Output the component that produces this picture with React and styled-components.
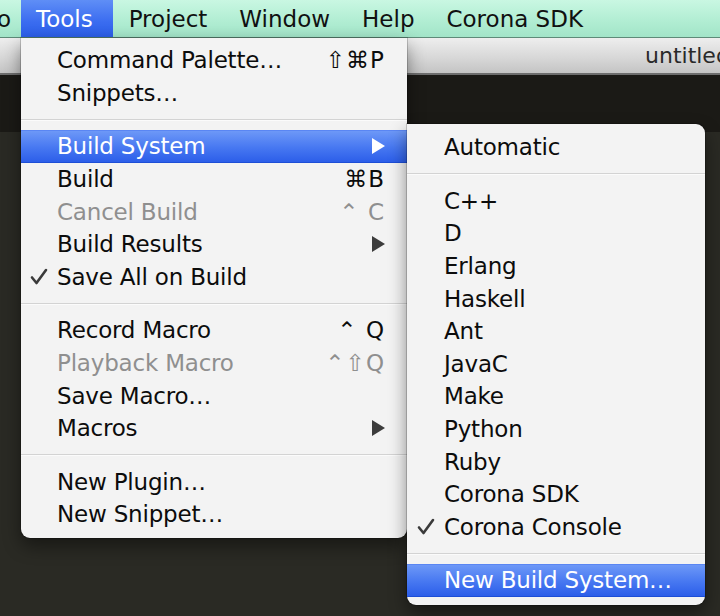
import React from 'react'
import styled, { createGlobalStyle, css } from 'styled-components'

const GlobalStyle = createGlobalStyle`
  html, body {
    margin: 0;
    padding: 0;
    background: #272822;
    overflow: hidden;
  }
  body {
    font-family: 'DejaVu Sans', 'Liberation Sans', sans-serif;
  }
`

const selected = css`
  color: #fff;
  background: linear-gradient(#6d98f7, #4677f1 55%, #2c5ee9);
  border-top: 1px solid #5a86f3;
  border-bottom: 1px solid #1d4ed6;
`

const Page = styled.div`
  position: relative;
  width: 720px;
  height: 616px;
  display: flex;
  flex-direction: column;
  background: #272822;
  overflow: hidden;
`

const MenuBar = styled.div`
  height: 37px;
  flex: none;
  display: flex;
  align-items: stretch;
  margin-left: -60px;
  background: linear-gradient(#c9f7e2, #b0edd2 60%, #a2e4c8);
  border-bottom: 1px solid #5e8a78;
`

const MenuTitle = styled.div`
  display: flex;
  align-items: center;
  padding: 0 16px;
  font-size: 23px;
  color: #111;
  white-space: nowrap;

  &:first-child {
    padding-right: 10px;
  }

  ${(p) =>
    p.$active &&
    css`
      padding: 0 20px 0 15px;
      color: #fff;
      background: linear-gradient(#5f8ef6, #3a6cf0 60%, #2b5ee8);
    `}
`

const TitleBar = styled.div`
  height: 35px;
  flex: none;
  display: flex;
  align-items: center;
  padding-left: 645px;
  background: linear-gradient(#eeeeee, #d6d6d6 60%, #c4c4c4);
  border-bottom: 2px solid #6d6d6d;
  font-size: 22px;
  color: #2a2a2a;
  white-space: nowrap;
`

const TabStrip = styled.div`
  height: 57px;
  flex: none;
  background: #1b1a16;
`

const Editor = styled.div`
  flex: 1;
  background: #2a2a24;
`

const Dropdown = styled.div`
  position: absolute;
  top: ${(p) => p.$top}px;
  left: ${(p) => p.$left}px;
  width: ${(p) => p.$width}px;
  display: flex;
  flex-direction: column;
  padding: ${(p) => p.$padTop}px 0 ${(p) => p.$padBottom}px;
  background: #f3f3f3;
  border-radius: ${(p) => (p.$sub ? '0 9px 9px 9px' : '0 0 9px 9px')};
  box-shadow: 0 8px 18px rgba(0, 0, 0, 0.45), 0 0 0 1px rgba(0, 0, 0, 0.18);
  font-size: 23px;
  letter-spacing: -0.2px;
  z-index: ${(p) => (p.$sub ? 3 : 2)};
`

const Row = styled.div`
  height: 32.6px;
  box-sizing: border-box;
  display: flex;
  align-items: center;
  padding-right: 22px;
  color: ${(p) => (p.$disabled ? '#8f8f8f' : '#0c0c0c')};
  border-top: 1px solid transparent;
  border-bottom: 1px solid transparent;
  ${(p) => p.$selected && selected}
`

const Gutter = styled.div`
  width: ${(p) => p.$w}px;
  flex: none;
  display: flex;
  justify-content: center;
  align-items: center;
`

const Label = styled.span`
  flex: 1;
  white-space: nowrap;
`

const Shortcut = styled.span`
  white-space: nowrap;
  letter-spacing: 1px;
`

const Separator = styled.div`
  height: 21px;
  flex: none;
  display: flex;
  align-items: center;

  &::after {
    content: '';
    flex: 1;
    height: 1px;
    background: #d3d3d3;
    border-bottom: 1px solid #fbfbfb;
  }
`

const Check = () => (
  <svg width="18" height="17" viewBox="0 0 18 17">
    <path d="M2 9.5 L6.5 15 L16 2" fill="none" stroke="#3a3a3a" strokeWidth="2.6" strokeLinecap="round" strokeLinejoin="round" />
  </svg>
)

const Arrow = ({ white }) => (
  <svg width="13" height="16" viewBox="0 0 13 16">
    <path d="M0 0 L13 8 L0 16 Z" fill={white ? '#fff' : '#3c3c3c'} />
  </svg>
)

const mainMenu = [
  { label: 'Command Palette…', key: '⇧⌘P' },
  { label: 'Snippets…' },
  'sep',
  { label: 'Build System', sub: true, selected: true },
  { label: 'Build', key: '⌘B' },
  { label: 'Cancel Build', key: '⌃ C', disabled: true },
  { label: 'Build Results', sub: true },
  { label: 'Save All on Build', checked: true },
  'sep',
  { label: 'Record Macro', key: '⌃ Q' },
  { label: 'Playback Macro', key: '⌃⇧Q', disabled: true },
  { label: 'Save Macro…' },
  { label: 'Macros', sub: true },
  'sep',
  { label: 'New Plugin…' },
  { label: 'New Snippet…' },
]

const buildMenu = [
  { label: 'Automatic' },
  'sep',
  { label: 'C++' },
  { label: 'D' },
  { label: 'Erlang' },
  { label: 'Haskell' },
  { label: 'Ant' },
  { label: 'JavaC' },
  { label: 'Make' },
  { label: 'Python' },
  { label: 'Ruby' },
  { label: 'Corona SDK' },
  { label: 'Corona Console', checked: true },
  'sep',
  { label: 'New Build System…', selected: true },
]

function MenuItems({ items, gutter }) {
  return items.map((item, i) =>
    item === 'sep' ? (
      <Separator key={i} />
    ) : (
      <Row key={i} $selected={item.selected} $disabled={item.disabled}>
        <Gutter $w={gutter}>{item.checked && <Check />}</Gutter>
        <Label>{item.label}</Label>
        {item.key && <Shortcut>{item.key}</Shortcut>}
        {item.sub && <Arrow white={item.selected} />}
      </Row>
    )
  )
}

export default function App() {
  const titles = ['Goto', 'Tools', 'Project', 'Window', 'Help', 'Corona SDK']
  return (
    <>
      <GlobalStyle />
      <Page>
        <MenuBar>
          {titles.map((t) => (
            <MenuTitle key={t} $active={t === 'Tools'}>
              {t}
            </MenuTitle>
          ))}
        </MenuBar>
        <TitleBar>untitled</TitleBar>
        <TabStrip />
        <Editor />

        <Dropdown $top={38} $left={21} $width={386} $padTop={6} $padBottom={7}>
          <MenuItems items={mainMenu} gutter={36} />
        </Dropdown>
        <Dropdown $sub $top={124} $left={407} $width={298} $padTop={7} $padBottom={8}>
          <MenuItems items={buildMenu} gutter={37} />
        </Dropdown>
      </Page>
    </>
  )
}
